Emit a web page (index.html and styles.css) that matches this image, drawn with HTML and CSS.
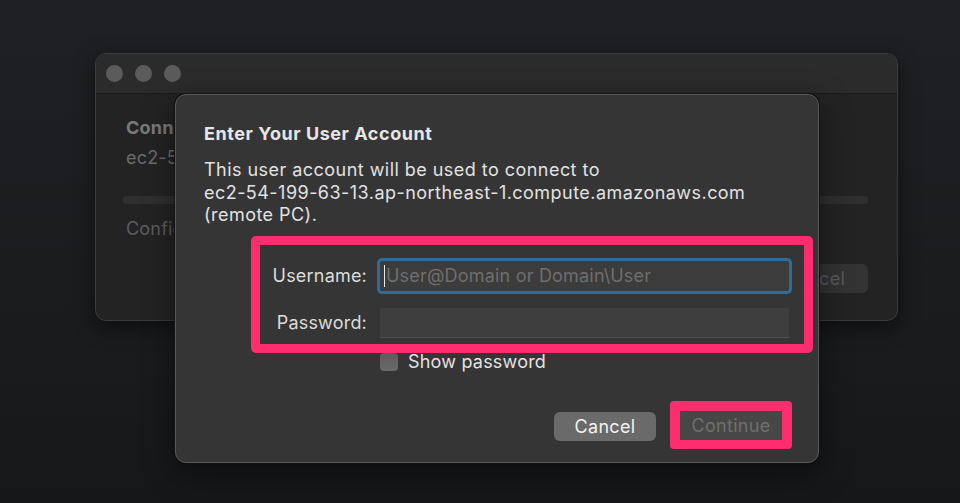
FILE: index.html
```html
<!DOCTYPE html>
<html lang="en">
	<head>
		<meta charset="UTF-8" />
		<meta name="viewport" content="width=device-width, initial-scale=1.0" />
		<title>Enter Your User Account</title>
		<link rel="stylesheet" href="styles.css">
	</head>
	<body>
		<div class="window">
			<div class="titlebar">
				<span class="light"></span>
				<span class="light"></span>
				<span class="light"></span>
			</div>
			<div class="window-body">
				<div class="conn-title clip">Connecting to remote PC</div>
				<div class="conn-host clip">ec2-54-199-63-13.ap-northeast-1.compute.amazonaws.com</div>
				<div class="progress"></div>
				<div class="conn-status clip">Configuring remote PC...</div>
				<div class="back-actions">
					<button class="back-btn">cel</button>
				</div>
			</div>
		</div>

		<div class="sheet">
			<div class="sheet-title">Enter Your User Account</div>
			<div class="sheet-text">
				This user account will be used to connect to<br>
				ec2-54-199-63-13.ap-northeast-1.compute.amazonaws.com<br>
				(remote PC).
			</div>

			<div class="highlight fields">
				<label class="field-label" for="username">Username:</label>
				<div class="field focused">
					<span class="caret"></span>
					<input id="username" type="text" placeholder="User@Domain or Domain\User">
				</div>
				<label class="field-label" for="password">Password:</label>
				<div class="field">
					<input id="password" type="password">
				</div>
			</div>

			<div class="show-row">
				<span class="checkbox"></span>
				<span>Show password</span>
			</div>

			<div class="actions">
				<button class="btn cancel">Cancel</button>
				<div class="highlight continue-wrap">
					<button class="btn continue" disabled>Continue</button>
				</div>
			</div>
		</div>
	</body>
</html>
```

FILE: styles.css
```css
body {
	margin: 0;
	height: 503px;
	overflow: hidden;
	background: linear-gradient(180deg, #1f2023 0%, #1b1c1e 60%, #161719 100%);
	font-family: Inter, "Liberation Sans", Arial, sans-serif;
	font-size: 18px;
	letter-spacing: 0.2px;
	display: flex;
	flex-direction: column;
	align-items: flex-start;
}

.window {
	margin: 53px 0 0 95px;
	width: 801px;
	height: 266px;
	background-color: #232324;
	border: 1px solid #3b3b3c;
	border-radius: 11px;
	overflow: hidden;
	box-shadow: 0 6px 20px rgba(0, 0, 0, 0.5);
}

.titlebar {
	height: 39px;
	background-color: #2b2b2c;
	border-bottom: 1px solid #1b1b1c;
	display: flex;
	align-items: center;
	gap: 12px;
	padding-left: 10px;
}

.light {
	width: 17px;
	height: 17px;
	border-radius: 50%;
	background-color: #5b5b5c;
}

.window-body {
	padding: 23px 29px 0 30px;
	display: flex;
	flex-direction: column;
}

/* the sheet hides the rest of these lines */
.clip {
	width: 49px;
	white-space: nowrap;
	overflow: hidden;
}

.conn-title {
	font-weight: bold;
	color: #7a7a7b;
	line-height: 22px;
}

.conn-host {
	color: #6b6b6c;
	line-height: 22px;
	margin-top: 8px;
}

.progress {
	height: 8px;
	border-radius: 4px;
	background-color: #2f2f30;
	margin: 27px 0 0 -3px;
}

.conn-status {
	color: #5d5d5e;
	line-height: 22px;
	margin-top: 14px;
}

.back-actions {
	display: flex;
	justify-content: flex-end;
	margin-top: 24px;
}

.back-btn {
	width: 68px;
	height: 29px;
	border: none;
	border-radius: 6px;
	background-color: #333334;
	color: #5a5a5b;
	font-family: inherit;
	font-size: 18px;
	letter-spacing: 0.4px;
	text-align: left;
	padding: 0 0 0 19px;
}

.sheet {
	position: absolute;
	left: 175px;
	top: 94px;
	width: 614px;
	height: 339px;
	background-color: #353535;
	border: 1px solid #5a5a5a;
	border-radius: 11px;
	box-shadow: 0 0 0 1px #111, 0 10px 30px rgba(0, 0, 0, 0.5);
	padding: 28px 0 0 28px;
	display: flex;
	flex-direction: column;
	color: #e4e4e4;
}

.sheet-title {
	font-weight: bold;
	line-height: 22px;
	letter-spacing: 0.55px;
	color: #e6e6e6;
}

.sheet-text {
	margin-top: 14px;
	line-height: 22.5px;
	letter-spacing: 0.46px;
	color: #e2e2e2;
}

.highlight {
	border: 9px solid #ff2d6d;
	border-radius: 5px;
}

.fields {
	margin: 9px 5px 0 47px;
	display: grid;
	grid-template-columns: 107px 409px;
	column-gap: 13px;
	row-gap: 17px;
	align-items: center;
	padding: 16px 15px 6px 0;
}

.field-label {
	text-align: right;
	color: #dcdcdc;
}

.field {
	height: 30px;
	background-color: #3e3e3e;
	border-bottom: 1px solid #4d4d4d;
	box-sizing: border-box;
	display: flex;
	align-items: center;
	padding-left: 4px;
}

.field.focused {
	border-bottom: none;
	background-color: #3c3c3c;
	box-shadow: 0 0 0 3px #2f6b9b;
	border-radius: 2px;
}

.field input {
	flex: 1;
	min-width: 0;
	background: transparent;
	border: none;
	outline: none;
	color: #e0e0e0;
	font-family: inherit;
	font-size: 18px;
	letter-spacing: 0.2px;
	padding: 0;
}

.field input::placeholder {
	color: #6e6e6e;
}

.caret {
	width: 1px;
	height: 22px;
	background-color: #e8e8e8;
	margin-right: 1px;
}

.show-row {
	display: flex;
	align-items: center;
	gap: 10px;
	padding-left: 176px;
	line-height: 18px;
	color: #e2e2e2;
}

.checkbox {
	width: 18px;
	height: 18px;
	border-radius: 4px;
	background: linear-gradient(180deg, #5c5c5c, #6a6a6a);
}

.actions {
	display: flex;
	justify-content: flex-end;
	align-items: center;
	gap: 14px;
	margin-top: 30px;
	padding-right: 26px;
}

.btn {
	width: 102px;
	height: 29px;
	border: none;
	border-radius: 6px;
	font-family: inherit;
	font-size: 18px;
	letter-spacing: 0.3px;
	padding: 0;
}

.btn.cancel {
	background-color: #6a6a6a;
	color: #f2f2f2;
	margin-top: 3px;
}

.continue-wrap {
	border-width: 10px 10px 9px 10px;
	border-radius: 4px;
}

.btn.continue {
	display: block;
	border-radius: 0;
	background-color: #474747;
	color: #6f6f6f;
}
```
